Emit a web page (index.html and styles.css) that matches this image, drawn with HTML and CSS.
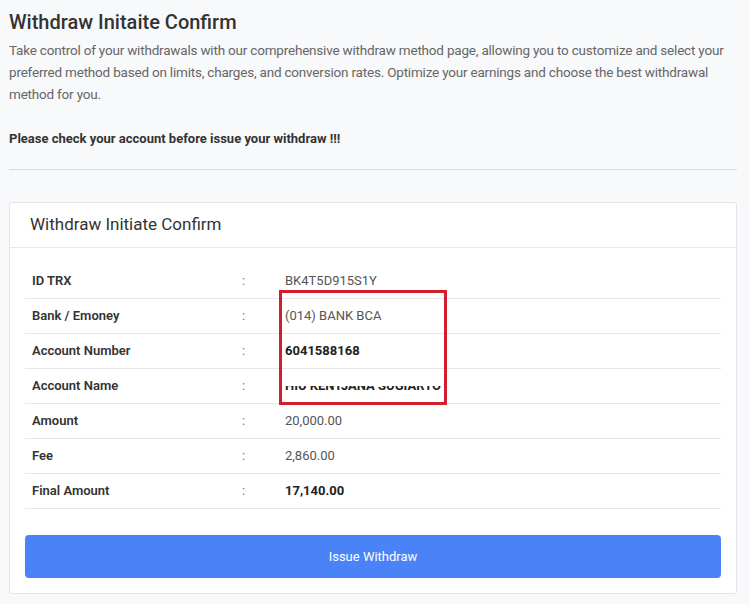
FILE: index.html
```html
<!DOCTYPE html>
<html lang="en">
<head>
    <meta charset="UTF-8">
    <meta name="viewport" content="width=device-width, initial-scale=1.0">
    <title>Withdraw Initaite Confirm</title>
    <link rel="stylesheet" href="styles.css">
</head>
<body>
    <div class="page">
        <h1 class="page-title">Withdraw Initaite Confirm</h1>
        <p class="intro">Take control of your withdrawals with our comprehensive withdraw method page, allowing you to customize and select your preferred method based on limits, charges, and conversion rates. Optimize your earnings and choose the best withdrawal method for you.</p>
        <p class="notice">Please check your account before issue your withdraw !!!</p>
        <hr class="divider">

        <!-- confirm card -->
        <div class="card">
            <div class="card-header">Withdraw Initiate Confirm</div>
            <div class="card-body">
                <table class="detail-table">
                    <tr>
                        <td class="label">ID TRX</td>
                        <td class="colon">:</td>
                        <td class="value">BK4T5D915S1Y</td>
                    </tr>
                    <tr>
                        <td class="label">Bank / Emoney</td>
                        <td class="colon">:</td>
                        <td class="value">(014) BANK BCA</td>
                    </tr>
                    <tr>
                        <td class="label">Account Number</td>
                        <td class="colon">:</td>
                        <td class="value strong">6041588168</td>
                    </tr>
                    <tr>
                        <td class="label">Account Name</td>
                        <td class="colon">:</td>
                        <td class="value strong"><span class="cut"><span>HIU KENTJANA SUGIARTO</span></span></td>
                    </tr>
                    <tr>
                        <td class="label">Amount</td>
                        <td class="colon">:</td>
                        <td class="value">20,000.00</td>
                    </tr>
                    <tr>
                        <td class="label">Fee</td>
                        <td class="colon">:</td>
                        <td class="value">2,860.00</td>
                    </tr>
                    <tr>
                        <td class="label">Final Amount</td>
                        <td class="colon">:</td>
                        <td class="value strong">17,140.00</td>
                    </tr>
                </table>
                <button class="btn-issue">Issue Withdraw</button>
            </div>
            <div class="highlight"></div>
        </div>
    </div>
</body>
</html>
```
FILE: styles.css
```css
* {
    margin: 0;
    padding: 0;
    box-sizing: border-box;
}

body {
    font-family: Roboto, "Liberation Sans", sans-serif;
    background: #f8f9fb;
    color: #444;
}

.page {
    padding: 9px 13px 0 9px;
}

.page-title {
    font-size: 20px;
    font-weight: 500;
    color: #333;
    line-height: 26px;
    margin-bottom: 4px;
}

.intro {
    font-size: 13.5px;
    letter-spacing: -0.2px;
    line-height: 22px;
    color: #666;
    margin-bottom: 24px;
}

.notice {
    font-size: 13px;
    font-weight: 700;
    color: #333;
    line-height: 20px;
}

.divider {
    border: none;
    border-top: 1px solid #dcdde0;
    margin: 20px 0 32px;
}

.card {
    position: relative;
    background: #fff;
    border: 1px solid #e4e5e8;
    border-radius: 3px;
}

.card-header {
    padding: 12px 20px 13px;
    font-size: 17px;
    color: #333;
    line-height: 19px;
    border-bottom: 1px solid #e8e9ec;
}

.card-body {
    padding: 15px 15px 15px;
}

.detail-table {
    width: 100%;
    border-collapse: collapse;
    font-size: 13px;
}

.detail-table td {
    height: 35px;
    padding: 0 7px;
    border-bottom: 1px solid #e6e7ea;
}

.label {
    width: 210px;
    font-weight: 600;
    color: #333;
}

.colon {
    width: 43px;
    color: #777;
}

.value {
    color: #555;
}

.value.strong {
    font-weight: 700;
    color: #222;
}

.cut {
    display: inline-block;
    height: 7px;
    overflow: hidden;
    vertical-align: -3px;
}

.cut span {
    display: block;
    margin-top: -8px;
    line-height: 15px;
}

.btn-issue {
    display: block;
    width: 100%;
    height: 43px;
    margin-top: 26px;
    background: #4a82f7;
    color: #fff;
    border: none;
    border-radius: 4px;
    font-family: inherit;
    font-size: 13px;
}

/* red marker around the bank details */
.highlight {
    position: absolute;
    left: 269px;
    top: 87px;
    width: 168px;
    height: 115px;
    border: 3px solid #d21f2b;
}
```
